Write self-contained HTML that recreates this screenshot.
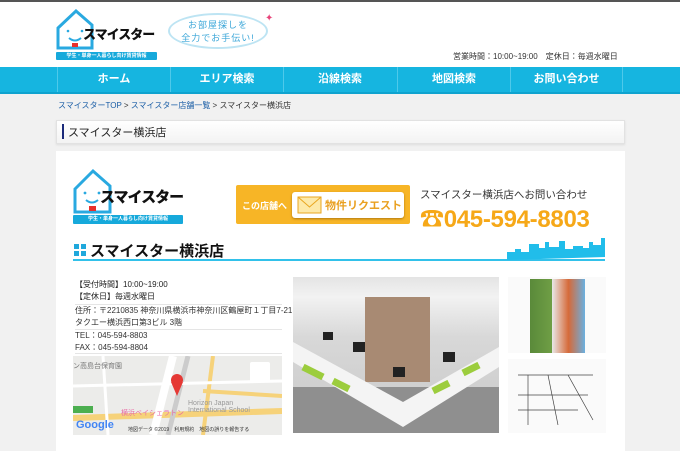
<!DOCTYPE html>
<html><head><meta charset="utf-8"><style>
*{margin:0;padding:0;box-sizing:border-box}
body{width:680px;height:450px;overflow:hidden;background:#f1f1f1;font-family:"Liberation Sans","Noto Sans CJK JP",sans-serif;position:relative;color:#222}
.a{position:absolute}
.hd{left:0;top:0;width:680px;height:67px;background:#fff;border-top:2px solid #555}
.nav{left:0;top:67px;width:680px;height:27px;background:#16b5e0;border-bottom:2px solid #0fa3cf}
.nav div{position:absolute;top:0;height:25px;width:113px;color:#fff;font-size:11px;font-weight:bold;text-align:center;line-height:25px;border-left:1px solid #4ec9ea}
.logo .h{font-weight:900;color:#111;letter-spacing:-1px}
.rib{background:#16a9db;color:#fff;font-size:5px;font-weight:bold;text-align:center;border-radius:1px}
</style></head><body>
<div class="a hd"></div>
<svg class="a" style="left:56px;top:8px" width="48" height="43"><path d="M2 20 L20 3 L36 17 L36 40 L2 40 Z" fill="none" stroke="#29a9e0" stroke-width="3"/><circle cx="12" cy="23" r="1.3" fill="#29a9e0"/><circle cx="26" cy="23" r="1.3" fill="#29a9e0"/><path d="M13 30 Q19 35 25 30" stroke="#29a9e0" stroke-width="2" fill="none"/><rect x="16" y="35" width="6" height="4" fill="#e8302a"/></svg>
<div class="a logo" style="left:83px;top:24px;font-size:13px"><span class="h">スマイスター</span></div>
<div class="a rib" style="left:56px;top:52px;width:101px;height:8px;line-height:8px">学生・単身一人暮らし向け賃貸情報</div>
<div class="a" style="left:168px;top:13px;width:100px;height:36px;border:2px solid #bde4f3;border-radius:50%;background:#fff;color:#3aa6d8;font-size:9px;text-align:center;line-height:13px;padding-top:4px;letter-spacing:1px">お部屋探しを<br>全力でお手伝い!</div>
<div class="a" style="left:265px;top:13px;color:#e8457a;font-size:10px">✦</div>
<div class="a" style="left:453px;top:51px;font-size:8px;color:#333">営業時間：10:00~19:00　定休日：毎週水曜日</div>
<div class="a nav">
<div style="left:57px">ホーム</div><div style="left:170px">エリア検索</div><div style="left:283px">沿線検索</div><div style="left:397px">地図検索</div><div style="left:510px;width:113px;border-right:1px solid #4ec9ea">お問い合わせ</div>
</div>
<div class="a" style="left:58px;top:100px;font-size:8px;color:#1b5ea6">スマイスターTOP <span style="color:#333">&gt;</span> スマイスター店舗一覧 <span style="color:#333">&gt; スマイスター横浜店</span></div>
<div class="a" style="left:56px;top:120px;width:569px;height:24px;background:linear-gradient(#fff,#f3f3f3);border:1px solid #e2e2e2;box-shadow:0 1px 2px #ddd"></div>
<div class="a" style="left:62px;top:124px;width:2px;height:15px;background:#1b2a7a"></div>
<div class="a" style="left:68px;top:124px;font-size:11px;color:#222">スマイスター横浜店</div>
<div class="a" style="left:56px;top:151px;width:569px;height:300px;background:#fff"></div>
<svg class="a" style="left:73px;top:168px" width="50" height="48"><path d="M2 21 L20 3 L37 18 L37 44 L2 44 Z" fill="none" stroke="#29a9e0" stroke-width="3"/><circle cx="12" cy="25" r="1.4" fill="#29a9e0"/><circle cx="26" cy="25" r="1.4" fill="#29a9e0"/><path d="M13 32 Q19 37 25 32" stroke="#29a9e0" stroke-width="2" fill="none"/><rect x="16" y="38" width="7" height="5" fill="#e8302a"/></svg>
<div class="a logo" style="left:100px;top:186px;font-size:15px"><span class="h">スマイスター</span></div>
<div class="a rib" style="left:73px;top:215px;width:110px;height:9px;line-height:9px">学生・単身一人暮らし向け賃貸情報</div>
<div class="a" style="left:236px;top:185px;width:174px;height:39px;background:#f7b526;border-radius:2px"></div>
<div class="a" style="left:242px;top:199px;font-size:9px;color:#fff;font-weight:bold">この店舗へ</div>
<div class="a" style="left:292px;top:192px;width:112px;height:26px;background:#fff;border-radius:3px;box-shadow:0 1px 2px #b07a10"></div>
<svg class="a" style="left:297px;top:196px" width="25" height="18"><rect x="1" y="1" width="23" height="16" fill="#fde9a8" stroke="#e9a620"/><path d="M1 1 L12.5 11 L24 1" fill="none" stroke="#e9a620"/></svg>
<div class="a" style="left:325px;top:197px;font-size:11px;color:#e9a020;font-weight:bold">物件リクエスト</div>
<div class="a" style="left:420px;top:187px;font-size:10.5px;color:#333">スマイスター横浜店へお問い合わせ</div>
<div class="a" style="left:420px;top:199px;font-size:24px;color:#f6a818;font-weight:bold;letter-spacing:-0.3px">☎045-594-8803</div>
<div class="a" style="left:74px;top:244px;width:12px;height:12px;background:linear-gradient(90deg,transparent 5px,#fff 5px,#fff 7px,transparent 7px),linear-gradient(transparent 5px,#fff 5px,#fff 7px,transparent 7px),#1fa8dc"></div>
<div class="a" style="left:90px;top:240px;font-size:15px;font-weight:bold;color:#111">スマイスター横浜店</div>
<div class="a" style="left:73px;top:259px;width:532px;height:2px;background:#32c1ea"></div>
<svg class="a" style="left:507px;top:238px" width="100" height="22"><path d="M0 22 V14 h8 v-3 h6 v3 h8 v-8 h10 v4 h6 v-6 h4 v5 h10 v-6 h6 v8 h8 v-3 h10 v2 h6 v-6 h4 v3 h8 v-10 h4 v22 Z" fill="#21bdea"/></svg>
<div class="a" style="left:75px;top:279px;font-size:8px;line-height:12px;color:#222">【受付時間】10:00~19:00<br>【定休日】毎週水曜日</div>
<div class="a" style="left:75px;top:304px;width:207px;border-top:1px solid #e5e5e5"></div>
<div class="a" style="left:75px;top:305px;font-size:8px;line-height:12px;color:#333">住所：〒2210835 神奈川県横浜市神奈川区鶴屋町１丁目7-21<br>タクエー横浜西口第3ビル 3階</div>
<div class="a" style="left:75px;top:329px;width:207px;border-top:1px solid #e5e5e5"></div>
<div class="a" style="left:75px;top:330px;font-size:8px;line-height:12px;color:#333">TEL：045-594-8803<br>FAX：045-594-8804</div>
<div class="a" style="left:75px;top:353px;width:207px;border-top:1px solid #e5e5e5"></div>
<div class="a" style="left:73px;top:356px;width:209px;height:79px;background:#ececea;overflow:hidden">
<svg width="209" height="79"><path d="M0 62 L209 55" stroke="#f6d27a" stroke-width="6"/><path d="M100 0 L80 79" stroke="#fff" stroke-width="8"/><path d="M115 0 L95 79" stroke="#ccc" stroke-width="5"/><path d="M140 0 L130 79" stroke="#f6d27a" stroke-width="4"/><path d="M0 30 L209 25" stroke="#fff" stroke-width="3"/><path d="M30 0 L35 79" stroke="#fff" stroke-width="3"/><path d="M130 35 L209 40" stroke="#f6d27a" stroke-width="4"/><circle cx="104" cy="24" r="6" fill="#e53935"/><path d="M98 26 L104 40 L110 26Z" fill="#e53935"/><rect x="177" y="6" width="20" height="20" fill="#fff" rx="2"/><rect x="0" y="50" width="20" height="7" fill="#4caf50"/></svg>
<div class="a" style="left:3px;top:63px;font-size:11px;font-weight:bold;color:#4285f4">Google</div>
<div class="a" style="left:55px;top:70px;font-size:5px;color:#333">地図データ ©2019　利用規約　地図の誤りを報告する</div>
<div class="a" style="left:0;top:5px;font-size:7px;color:#777">ン高島台保育園</div>
<div class="a" style="left:115px;top:44px;font-size:7px;color:#999">Horizon Japan<br>International School</div>
<div class="a" style="left:48px;top:52px;font-size:7px;color:#e86ca5">横浜ベイシェラトン</div>
</div>
<div class="a" style="left:293px;top:277px;width:206px;height:156px;background:linear-gradient(#e4e4e4 0,#f2f2f2 20px,#d8d8d8 60px,#c8c8c8 100%);overflow:hidden">
<div class="a" style="left:72px;top:20px;width:65px;height:85px;background:#a88a73"></div>
<div class="a" style="left:0;top:110px;width:206px;height:46px;background:#8f8f8f"></div>
<svg class="a" style="left:0;top:50px" width="206" height="106"><path d="M0 15 L110 75 L206 20 L206 40 L110 100 L0 35 Z" fill="#f4f4f4"/><path d="M10 40 l20 10 M40 54 l16 8 M140 64 l16 -8 M170 46 l16 -8" stroke="#9ccd3d" stroke-width="7"/><path d="M60 15 h12 v10 h-12z M100 40 h12 v10 h-12z M150 25 h12 v10 h-12z M30 5 h10 v8 h-10z" fill="#222"/></svg>
</div>
<div class="a" style="left:508px;top:277px;width:98px;height:76px;background:#fafafa"></div>
<div class="a" style="left:530px;top:279px;width:55px;height:74px;background:linear-gradient(90deg,#5a8a3a 0,#6f9e45 40%,#e8e8e8 40%,#d66a3a 70%,#6ab0e0 100%)"></div>
<div class="a" style="left:508px;top:359px;width:98px;height:74px;background:#fafafa"></div>
<svg class="a" style="left:518px;top:365px" width="80" height="60"><g stroke="#444" stroke-width="0.7" fill="none"><path d="M0 10 h75 M10 10 v50 M30 10 l10 50 M0 30 h70 M50 10 l25 45 M0 45 h60"/></g></svg>
</body></html>
